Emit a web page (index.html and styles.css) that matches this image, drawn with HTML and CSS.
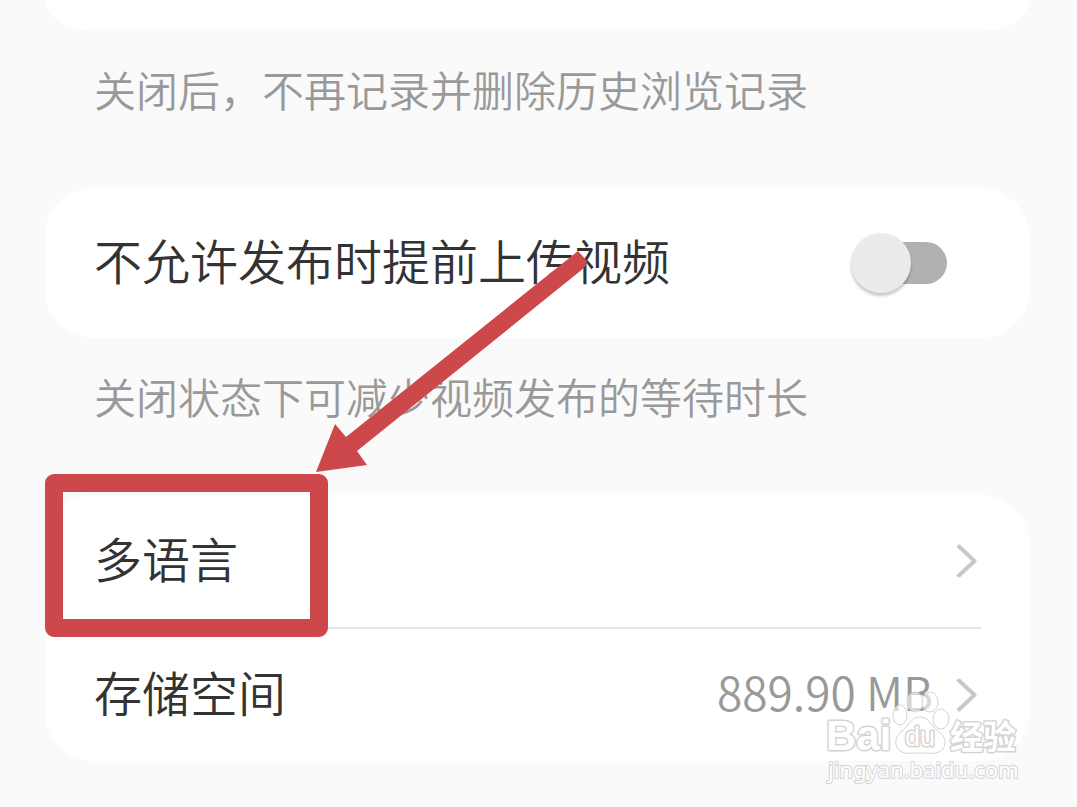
FILE: index.html
```html
<!DOCTYPE html>
<html lang="zh-CN">
<head>
<meta charset="utf-8">
<meta name="viewport" content="width=device-width, initial-scale=1">
<title>设置</title>
<link rel="stylesheet" href="styles.css">
</head>
<body>
<main class="settings">
  <section class="card card-tail"></section>
  <p class="note">关闭后，不再记录并删除历史浏览记录</p>

  <section class="card">
    <div class="row row-switch">
      <label class="label" for="preupload">不允许发布时提前上传视频</label>
      <input class="switch" id="preupload" type="checkbox" role="switch">
    </div>
  </section>
  <p class="note">关闭状态下可减少视频发布的等待时长</p>

  <section class="card">
    <a class="row row-link" href="#language">
      <span class="label">多语言</span>
      <svg class="chevron" viewBox="0 0 20 34" aria-hidden="true"><path d="M2 2.500 17.500 17 2 31.500"/></svg>
    </a>
    <hr class="divider">
    <a class="row row-link" href="#storage">
      <span class="label">存储空间</span>
      <span class="value">889.90 MB</span>
      <svg class="chevron" viewBox="0 0 20 34" aria-hidden="true"><path d="M2 2.500 17.500 17 2 31.500"/></svg>
    </a>
  </section>

  <div class="highlight"></div>
  <svg class="arrow" viewBox="0 0 274 226" aria-hidden="true">
    <path d="M262 5 271 15Q271 19 268 22L41 205 51 219 0 226 19 178 30 191Z"/>
  </svg>

  <svg class="watermark" viewBox="0 0 208 100" role="img" aria-label="Baidu 经验">
    <g class="mark">
      <ellipse cx="82" cy="27" rx="7" ry="10"/>
      <ellipse cx="97" cy="14" rx="8" ry="10"/>
      <ellipse cx="112" cy="14" rx="8" ry="10"/>
      <ellipse cx="123" cy="31" rx="8" ry="10"/>
      <path d="M102 29C94 29 91 37 85 42C77 48 76 55 80 61C85 67 93 65 102 65S120 67 125 61C129 54 127 48 119 42C113 37 110 29 102 29Z"/>
    </g>
    <text class="wm-brand" x="8" y="62">Bai</text>
    <text class="wm-du" x="87" y="58">du</text>
    <text class="wm-cn" x="132" y="61">经验</text>
    <text class="wm-url" x="10" y="90">jingyan.baidu.com</text>
  </svg>
</main>
</body>
</html>
```
FILE: styles.css
```css
* {
  box-sizing: border-box;
}

body {
  margin: 0;
  background: #fafafa;
  color: #333;
  font-family: "Noto Sans CJK SC", "Noto Sans", sans-serif;
  font-weight: 350;
}

.settings {
  position: relative;
  padding: 0 48px 45px 45px;
}

.card {
  background: #fff;
  border-radius: 48px;
}

.card-tail {
  height: 31px;
  border-radius: 0 0 48px 48px / 0 0 31px 31px;
}

.note {
  margin: 0;
  padding: 26px 49px 67px;
  color: #999;
  font-size: 42px;
  line-height: 64px;
}

.row {
  display: flex;
  align-items: center;
  padding: 0 52px 0 49px;
  color: inherit;
  text-decoration: none;
}

.row-switch {
  min-height: 150px;
  padding-right: 82px;
}

.row-link {
  min-height: 132px;
}

.label {
  flex: 1;
  padding-bottom: 8px;
  font-size: 48px;
  line-height: 64px;
}

.value {
  margin-right: 24px;
  padding-bottom: 8px;
  color: #999;
  font-size: 46px;
  line-height: 64px;
}

.switch {
  position: relative;
  appearance: none;
  width: 92px;
  height: 42px;
  margin: 0;
  border-radius: 21px;
  background: #b1b1b1;
}

.switch::before {
  content: "";
  position: absolute;
  top: -9px;
  left: -4px;
  width: 60px;
  height: 60px;
  border-radius: 50%;
  background: #ebebeb;
  box-shadow: 0 3px 3px rgba(0, 0, 0, 0.22);
}

.switch:checked::before {
  left: 36px;
}

.chevron {
  width: 20px;
  height: 34px;
  fill: none;
  stroke: #c8c8c8;
  stroke-width: 4;
  stroke-linecap: round;
  stroke-linejoin: round;
}

.divider {
  height: 2px;
  margin: 0 48px 0 49px;
  border: 0;
  background: #e6e6e6;
}

.highlight {
  position: absolute;
  top: 474px;
  left: 45px;
  width: 283px;
  height: 163px;
  border: 18px solid #cd484a;
  border-radius: 9px;
  pointer-events: none;
}

.arrow {
  position: absolute;
  top: 246px;
  left: 316px;
  width: 274px;
  height: 226px;
  fill: #cd484a;
  pointer-events: none;
}

.watermark {
  position: absolute;
  top: 688px;
  right: 51px;
  width: 208px;
  height: 100px;
  fill: #fff;
  stroke: #d4d4d4;
  stroke-width: 1;
  pointer-events: none;
}

.mark {
  fill-opacity: 0.6;
}

.wm-brand,
.wm-du,
.wm-cn,
.wm-url {
  paint-order: stroke;
  stroke-width: 3;
  stroke-linejoin: round;
}

.wm-brand {
  font: bold 42px "Liberation Sans", sans-serif;
}

.wm-du {
  font: 27px "Liberation Sans", sans-serif;
}

.wm-cn {
  font: bold 33px "Noto Sans CJK SC", sans-serif;
}

.wm-url {
  stroke-width: 2;
  font: 22px "Noto Sans", sans-serif;
}
```
